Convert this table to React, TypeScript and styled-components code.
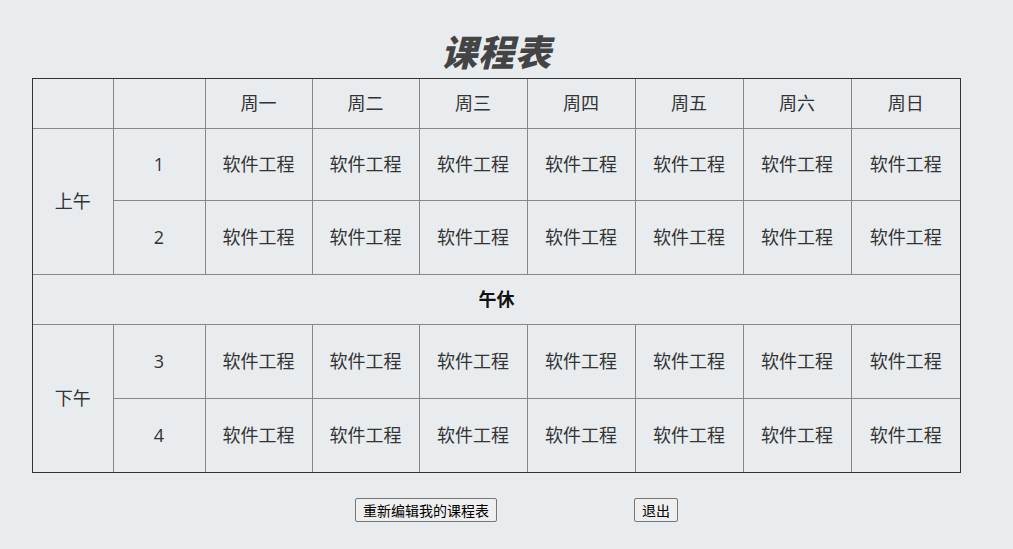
import React from "react";
import styled, { createGlobalStyle } from "styled-components";

const Global = createGlobalStyle`
  html, body { margin: 0; padding: 0; background: #e8ecef; }
  body { font-family: "Open Sans", "Noto Sans CJK SC", sans-serif; color: #333; }
`;

const Page = styled.div`
  width: 1013px;
  height: 549px;
  padding: 27px 0 0 32px;
  box-sizing: border-box;
`;

const Title = styled.h1`
  margin: 0;
  width: 929px;
  height: 51px;
  text-align: center;
  font-family: "Noto Sans CJK SC", sans-serif;
  font-style: italic;
  font-weight: 900;
  font-size: 36px;
  line-height: 46px;
  color: #444;
  letter-spacing: 1px;
`;

const Frame = styled.div`
  width: 927px;
  border: 1px solid #333;
`;

const Table = styled.table`
  border-collapse: collapse;
  width: 927px;
  border-style: hidden;
  table-layout: fixed;
`;

const Cell = styled.td<{ $h?: number; $bold?: boolean }>`
  border: 1px solid #888;
  text-align: center;
  vertical-align: middle;
  padding: 0 0 1px;
  line-height: 24px;
  height: ${(p) => (p.$h ? p.$h - 2 : 48)}px;
  font-size: 18px;
  font-weight: ${(p) => (p.$bold ? 700 : 400)};
  color: ${(p) => (p.$bold ? "#111" : "#333")};
  font-family: "Open Sans", "Noto Sans CJK SC", sans-serif;
`;

const Buttons = styled.div`
  display: flex;
  align-items: center;
  margin-top: 25px;
  padding-left: 323px;
  gap: 137px;
`;

const Btn = styled.button`
  font-family: "Noto Sans CJK SC", sans-serif;
  font-size: 14px;
  line-height: 18px;
  height: 24px;
  padding: 0 7px;
  background: #efefef;
  border: 1px solid #767676;
  border-radius: 2px;
  color: #000;
`;

const days = ["周一", "周二", "周三", "周四", "周五", "周六", "周日"];
const widths = [80, 92, 107, 107, 108, 108, 108, 108, 109];

const CourseRow = ({ label, n, h }: { label?: string; n: number; h: number }) => (
  <tr>
    {label && <Cell rowSpan={2}>{label}</Cell>}
    <Cell $h={h}>{n}</Cell>
    {days.map((d) => (
      <Cell key={d} $h={h}>软件工程</Cell>
    ))}
  </tr>
);

export default function App() {
  return (
    <>
      <Global />
      <Page>
        <Title>课程表</Title>
        <Frame>
          <Table>
            <colgroup>
              {widths.map((w, i) => (
                <col key={i} style={{ width: w }} />
              ))}
            </colgroup>
            <tbody>
              <tr>
                <Cell $h={50}></Cell>
                <Cell $h={50}></Cell>
                {days.map((d) => (
                  <Cell key={d} $h={50}>{d}</Cell>
                ))}
              </tr>
              <CourseRow label="上午" n={1} h={72} />
              <CourseRow n={2} h={74} />
              <tr>
                <Cell colSpan={9} $h={50} $bold>午休</Cell>
              </tr>
              <CourseRow label="下午" n={3} h={74} />
              <CourseRow n={4} h={74} />
            </tbody>
          </Table>
        </Frame>
        <Buttons>
          <Btn>重新编辑我的课程表</Btn>
          <Btn>退出</Btn>
        </Buttons>
      </Page>
    </>
  );
}
